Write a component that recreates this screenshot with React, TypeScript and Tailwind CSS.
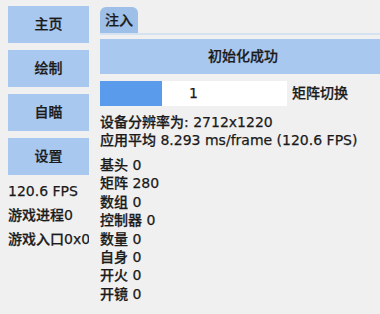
export default function App() {
  const nav = ["主页", "绘制", "自瞄", "设置"];
  const stats = [
    ["基头", "0"],
    ["矩阵", "280"],
    ["数组", "0"],
    ["控制器", "0"],
    ["数量", "0"],
    ["自身", "0"],
    ["开火", "0"],
    ["开镜", "0"],
  ];

  return (
    <div
      className="w-[380px] h-[314px] bg-[#f0f0f0] text-[#1a1a1a] text-[14px] font-medium overflow-hidden flex [-webkit-text-stroke:0.25px_#1a1a1a]"
      style={{ fontFamily: '"DejaVu Sans", "Noto Sans CJK SC", sans-serif' }}
    >
      {/* left menu */}
      <div className="w-[92px] shrink-0 pl-[8px] pt-[6px] flex flex-col">
        <div className="flex flex-col gap-[7px]">
          {nav.map((n) => (
            <div
              key={n}
              className="w-[81px] h-[37px] bg-[#a9c8f0] flex items-center justify-center"
            >
              {n}
            </div>
          ))}
        </div>
        <div className="w-[81px] overflow-hidden whitespace-nowrap mt-[4px] flex flex-col">
          <p className="h-[24px] leading-[24px]">120.6 FPS</p>
          <p className="h-[24px] leading-[24px]">游戏进程0</p>
          <p className="h-[24px] leading-[24px]">游戏入口0x0000</p>
        </div>
      </div>

      {/* right panel */}
      <div className="flex-1 pl-[8px] pt-[7px] flex flex-col min-w-0">
        <div className="flex">
          <div className="h-[26px] px-[5px] bg-[#9dbfe8] rounded-t-[6px] flex items-center">
            注入
          </div>
        </div>
        <div className="h-[2px] bg-[#d4e2f2] w-[300px]" />
        <div className="w-[286px] h-[35px] mt-[4px] bg-[#a9c8f0] flex items-center justify-center">
          初始化成功
        </div>
        <div className="flex items-center mt-[7px] h-[25px] whitespace-nowrap">
          <div className="w-[187px] h-full bg-white flex items-center relative">
            <div className="absolute left-0 top-0 h-full w-[62px] bg-[#5b9bec]" />
            <span className="w-full text-center">1</span>
          </div>
          <span className="ml-[5px]">矩阵切换</span>
        </div>
        <div className="mt-[7px] flex flex-col whitespace-nowrap">
          <p className="h-[18px] leading-[18px]">设备分辨率为: 2712x1220</p>
          <p className="h-[18px] leading-[18px]">应用平均 8.293 ms/frame (120.6 FPS)</p>
        </div>
        <div className="mt-[7px] flex flex-col whitespace-nowrap">
          {stats.map(([k, v]) => (
            <p key={k} className="h-[18.4px] leading-[18.4px]">
              {k} {v}
            </p>
          ))}
        </div>
      </div>
    </div>
  );
}
